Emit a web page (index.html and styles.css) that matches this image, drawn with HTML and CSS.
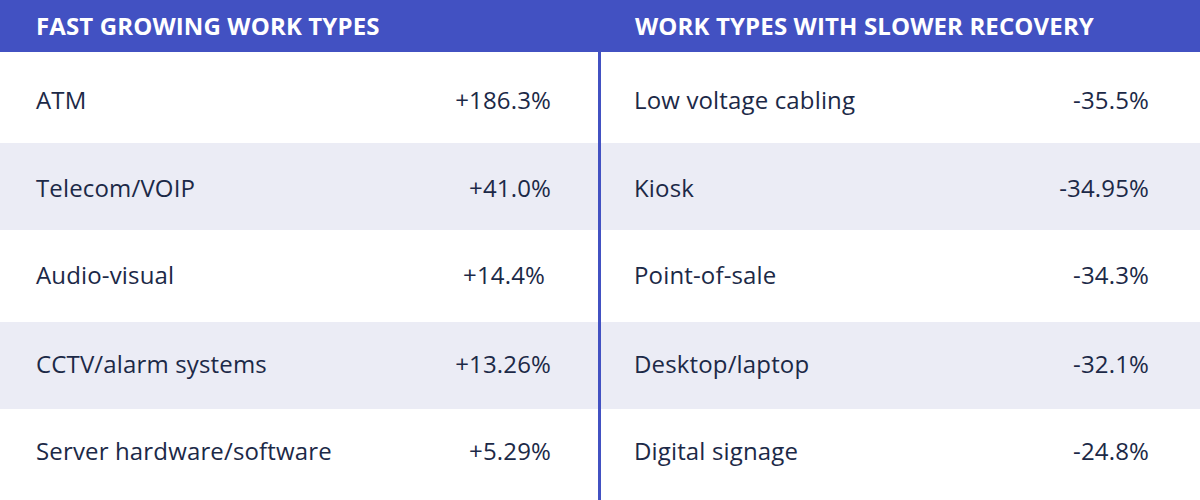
FILE: index.html
```html
<!DOCTYPE html>
<html>
<head>
<meta charset="utf-8">
<link rel="stylesheet" href="styles.css">
</head>
<body>
<div class="table">
  <div class="head">
    <div class="hcell">FAST GROWING WORK TYPES</div>
    <div class="hcell right">WORK TYPES WITH SLOWER RECOVERY</div>
  </div>
  <div class="row tall r1">
    <div class="cell"><span>ATM</span><span class="val">+186.3%</span></div>
    <div class="cell right"><span>Low voltage cabling</span><span class="val">-35.5%</span></div>
  </div>
  <div class="row alt r2">
    <div class="cell"><span>Telecom/VOIP</span><span class="val">+41.0%</span></div>
    <div class="cell right"><span>Kiosk</span><span class="val">-34.95%</span></div>
  </div>
  <div class="row tall r3">
    <div class="cell"><span>Audio-visual</span><span class="val shift">+14.4%</span></div>
    <div class="cell right"><span>Point-of-sale</span><span class="val">-34.3%</span></div>
  </div>
  <div class="row alt r4">
    <div class="cell"><span>CCTV/alarm systems</span><span class="val">+13.26%</span></div>
    <div class="cell right"><span>Desktop/laptop</span><span class="val">-32.1%</span></div>
  </div>
  <div class="row tall r5">
    <div class="cell"><span>Server hardware/software</span><span class="val">+5.29%</span></div>
    <div class="cell right"><span>Digital signage</span><span class="val">-24.8%</span></div>
  </div>
</div>
</body>
</html>
```
FILE: styles.css
```css
html, body {
  margin: 0;
  padding: 0;
  background: #ffffff;
}
body {
  font-family: "Open Sans", "Liberation Sans", sans-serif;
  color: #1c2947;
  width: 1200px;
  height: 500px;
  overflow: hidden;
}
.head {
  display: grid;
  grid-template-columns: 599px 601px;
  height: 52px;
  background: #4251c2;
  color: #ffffff;
}
.hcell {
  display: flex;
  align-items: center;
  padding-left: 36px;
  font-size: 24px;
  font-weight: 700;
  letter-spacing: 0.13px;
  padding-bottom: 1px;
  white-space: nowrap;
}
.row {
  display: grid;
  grid-template-columns: 598px 602px;
}
.row.tall { height: 91px; }
.row.r3 { height: 92px; }
.row.alt {
  height: 87px;
  background: #ebecf5;
}
.cell {
  display: flex;
  align-items: center;
  justify-content: space-between;
  box-sizing: border-box;
  padding-left: 36px;
  padding-right: 47px;
  font-size: 24px;
  letter-spacing: 0.15px;
}
.cell.right {
  border-left: 3px solid #4251c2;
  padding-left: 33px;
  padding-right: 51px;
}
.r1 .cell { padding-top: 4px; }
.r2 .cell { padding-top: 1px; }
.r3 .cell { padding-bottom: 3px; }
.r4 .cell { padding-bottom: 5px; }
.r5 .cell { padding-bottom: 9px; }
.val.shift {
  margin-right: 6px;
}
```
